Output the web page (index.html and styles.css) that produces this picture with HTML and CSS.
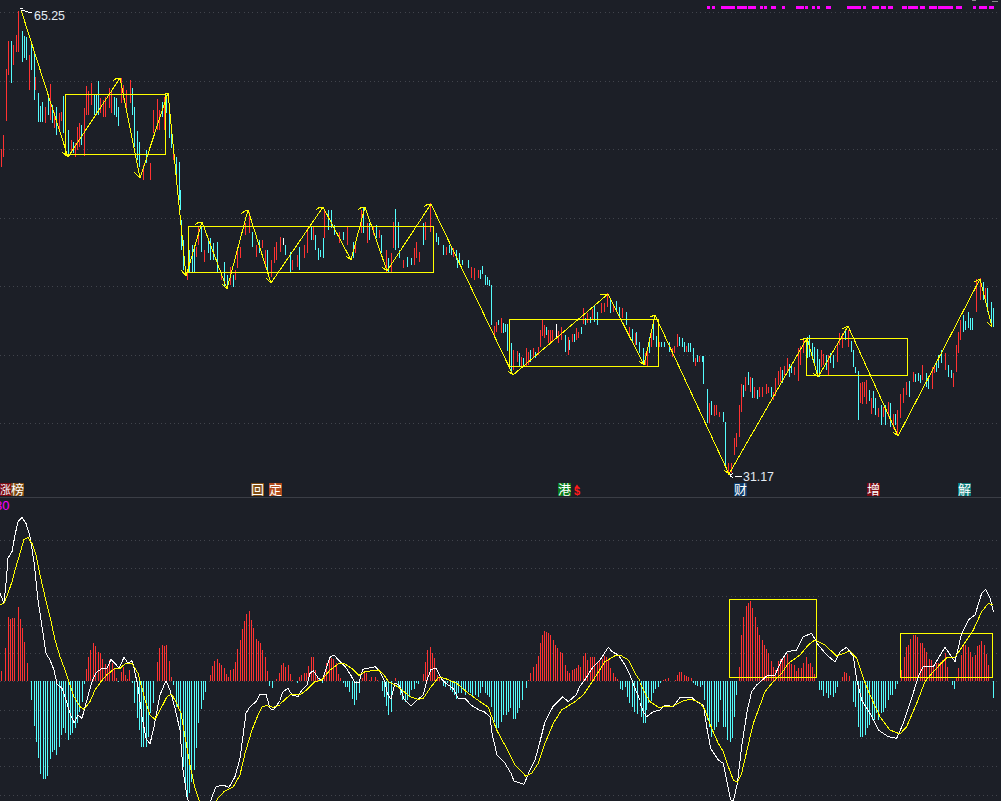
FILE: index.html
```html
<!DOCTYPE html>
<html lang="zh">
<head>
<meta charset="utf-8">
<title>K线图</title>
<link rel="stylesheet" href="styles.css">
</head>
<body>
<main class="chart">
<svg class="pane pane-price" width="1001" height="497" viewBox="0 0 1001 497">
  <path class="grid" d="M0 12.5H1001M0 81.5H1001M0 149.5H1001M0 218.5H1001M0 286.5H1001M0 355.5H1001M0 423.5H1001"/>
  <path class="signal" d="M707 7.5h3M712 7.5h3M721 7.5h14M737 7.5h10M748 7.5h8M760 7.5h3M764 7.5h3M771 7.5h5M782 7.5h3M796 7.5h8M805 7.5h3M812 7.5h3M817 7.5h3M826 7.5h5M847 7.5h14M863 7.5h3M872 7.5h7M881 7.5h5M888 7.5h5M902 7.5h5M908 7.5h10M920 7.5h5M929 7.5h8M938 7.5h15M956 7.5h6M973 7.5h3M979 7.5h8M989 7.5h5"/>
  <path class="tick" d="M972 0.5h4M992 1.5h6"/>

  <g transform="scale(.33333)">
    <path class="red" d="M4 447V500M12 405V470M19 207V362M25 123V225M40 135V195M49 105V155M55 33V155M88 165V270M108 230V270M137 320V368M151 252V360M163 335V385M178 340V390M184 335V362M214 420V455M226 430V470M232 380V450M238 368V440M253 323V467M259 258V345M265 273V345M274 250V315M302 295V340M310 300V350M318 290V350M328 265V325M336 270V340M365 235V310M372 255V300M381 270V330M391 240V310M430 495V540M451 490V540M460 330V400M472 297V390M478 330V390M495 290V390M522 445V480"/>
    <path class="cyan" d="M34 123V248M67 93V185M73 108V175M81 110V180M96 130V210M104 155V300M115 280V365M121 318V365M129 305V365M145 285V345M157 315V370M169 322V405M190 287V400M198 363V450M207 390V465M220 425V460M245 375V435M283 285V345M289 285V340M295 243V345M344 290V345M350 295V350M355 320V378M397 265V345M403 320V440M412 393V480M420 425V500M439 450V490M487 305V350M500 285V340M510 325V415M516 385V445M530 470V525M540 487V600"/>
  </g>
  <g transform="translate(180 190) scale(.33333)">
    <path class="red" d="M22 240V270M50 170V200M56 110V165M75 180V215M125 250V270M152 232V285M166 240V270M172 170V235M183 170V205M196 100V135M208 65V130M229 165V200M247 150V175M256 180V235M275 210V260M284 170V220M291 155V210M302 140V185M338 210V240M352 195V230M374 165V205M384 115V190M400 110V150M434 60V145M480 125V160M502 110V165M528 155V190M545 60V130M564 100V160M580 110V135M598 120V145M620 180V245M634 190V245M640 95V175M672 210V235M703 175V225M710 155V205M718 185V215M738 95V150M752 40V125M799 170V195M822 175V200"/>
    <path class="cyan" d="M2 0V60M5 90V180M12 150V240M30 180V245M38 165V245M45 170V245M65 110V185M85 145V190M91 145V210M100 160V210M113 155V245M133 215V290M143 255V295M160 255V292M217 125V170M240 150V190M262 180V245M317 165V195M333 185V245M360 170V240M395 110V150M407 135V180M415 175V210M422 180V200M430 145V205M447 60V120M454 60V115M465 105V135M492 125V150M520 155V205M552 55V130M570 100V150M590 105V145M606 135V190M626 205V245M646 58V180M656 97V175M660 180V205M684 200V230M695 205V225M732 100V165M760 115V155M770 130V155M777 140V165M790 165V195M808 165V190M815 170V195M830 180V210M838 190V215"/>
    <path class="white" d="M310 145V165"/>
  </g>
  <g transform="translate(440 260) scale(.33333)">
    <path class="red" d="M96 20V55M105 25V60M115 30V55M163 197V235M169 185V215M184 175V218M210 225V320M222 270V330M232 272V305M244 290V318M259 265V320M265 275V315M280 265V290M295 260V285M301 210V262M307 178V228M313 195V235M327 210V250M333 210V245M339 210V245M356 212V248M366 200V240M385 230V285M397 222V245M411 205V240M417 215V235M431 145V192M443 160V190M458 148V178M484 128V158M493 128V155M503 100V140M520 135V155M549 145V175M570 202V235M586 220V255M616 280V315M622 260V318M634 215V262M660 245V262M698 265V292M705 258V278M713 222V260M740 258V275M766 293V318M780 288V305"/>
    <path class="cyan" d="M52 0V25M68 0V15M87 0V25M121 30V57M128 18V42M137 45V75M142 52V75M148 60V78M154 75V195M175 180V195M191 190V220M196 192V215M202 192V272M216 248V335M238 280V320M250 295V318M271 270V305M287 275V295M319 200V225M377 225V275M390 240V270M405 222V245M424 200V222M437 175V195M451 172V190M464 135V185M472 155V195M511 120V160M530 123V155M540 142V170M561 155V195M577 208V248M591 215V255M600 245V280M610 265V310M628 230V280M640 180V240M650 228V262M665 245V262M675 245V260M690 245V275M720 232V258M727 235V260M733 245V275M746 250V275M752 250V275M760 265V305M772 285V305M787 287V305"/>
    <path class="white" d="M349 192V235"/>
  </g>
  <g transform="translate(700 270) scale(.33333)">
    <path class="red" d="M28 400V460M43 405V437M50 405V435M60 425V440M85 580V610M95 580V610M103 505V555M109 490V530M118 405V500M125 342V425M138 322V362M152 322V365M165 352V385M180 352V382M188 350V380M199 343V372M207 350V370M220 365V390M227 325V378M235 303V345M243 292V335M255 288V315M263 265V310M284 290V315M295 235V332M303 228V285M310 205V250M366 240V290M372 252V285M385 255V315M412 225V275M420 190V225M428 190V235M447 180V230M481 340V400M487 335V403M495 335V380M501 330V402M514 385V432M535 415V442M550 410V440M565 395V440M580 432V478M594 420V495M603 372V445M612 355V400M620 335V375M640 305V335M669 285V330M699 290V357M705 285V310M738 250V300M762 308V350M769 225V305M775 185V250M783 150V210M830 28V125M841 25V90M858 55V95"/>
    <path class="cyan" d="M12 258V342M22 357V460M34 392V435M71 427V455M76 455V595M131 345V380M145 307V345M157 325V385M172 360V388M214 350V382M249 300V340M270 283V320M276 285V310M322 200V265M330 195V260M338 218V270M344 232V280M352 238V310M358 268V320M380 255V300M392 250V280M400 255V295M437 180V210M455 212V245M461 240V290M467 290V310M475 303V450M508 360V392M522 362V415M528 385V435M544 405V465M556 405V465M573 400V470M587 432V465M628 332V382M647 312V335M655 310V332M661 315V340M681 310V350M687 325V358M711 280V305M717 255V295M724 240V280M747 285V320M754 300V325M790 135V185M798 152V180M805 125V175M813 145V180M819 145V180M852 35V90M864 55V125M874 95V160M880 115V170"/>
  </g>

  <g class="box">
    <rect x="65.5" y="94.5" width="100" height="60"/>
    <rect x="188.5" y="226.5" width="245" height="46"/>
    <rect x="509.5" y="319.5" width="149" height="47"/>
    <rect x="806.5" y="338.5" width="101" height="37"/>
  </g>
  <polyline class="zig" points="21,10 68,157 120,78 140,178 168,93 186,276 202,222 227,289 248,210 271,283 323,207 351,260 365,207 387,271 431,204 513,375 608,294 644,365 655,315 729,474 807,338 818,377 848,326 898,436 980,279 992,327"/>
  <path class="zig" d="M62 152L68 157M134 172L140 178M181 270L186 276M222 284L227 289M266 278L271 283M346 256L351 260M382 267L387 271M508 371L513 375M639 361L644 365M724 470L729 474M813 373L818 377M893 432L898 436M987 322L992 327M113 81L117 78L120 78M195 225L199 222L202 222M241 214L245 211L248 210M316 210L320 207L323 207M358 210L362 207L365 207M424 207L428 204L431 204M600 294L608 294M650 317L655 315M800 340L807 338M842 329L848 326M974 282L980 279M163 95L168 93"/>
  <path class="dot" d="M67 155h2v2h-2zM226 287h2v2h-2zM270 281h2v2h-2zM386 269h2v2h-2zM728 473h2v2h-2z"/>

  <path class="arrow" d="M21 10L32 13M20 9L23 8M735 476.5H742M730 475.5L733 473M730 475.5L733 478"/>
  <text class="price" x="34" y="20">65.25</text>
  <text class="price" x="743" y="481">31.17</text>

  <g class="tags">
    <rect class="t-red" x="0" y="483" width="11" height="13"/><text class="tag-narrow" x="0" y="494">涨</text>
    <rect class="t-brown" x="11" y="483" width="13" height="13"/><text x="11" y="494">榜</text>
    <rect class="t-brown" x="251" y="483" width="13" height="13"/><text x="251" y="494">回</text>
    <rect class="t-orange" x="269" y="483" width="13" height="13"/><text x="269" y="494">定</text>
    <rect class="t-green" x="558" y="483" width="13" height="13"/><text x="558" y="494">港</text>
    <rect class="t-navy" x="734" y="483" width="13" height="13"/><text x="734" y="494">财</text>
    <rect class="t-red" x="867" y="483" width="13" height="13"/><text x="867" y="494">增</text>
    <rect class="t-teal" x="958" y="483" width="13" height="13"/><text x="958" y="494">解</text>
  </g>
  <path class="up" d="M577 484.500L579.500 488H574.500Z"/>
  <text class="dollar" x="574" y="495">$</text>
</svg>

<div class="divider"></div>

<svg class="pane pane-macd" width="1001" height="303" viewBox="0 498 1001 303">
  <path class="grid" d="M0 540.500H1001M0 568.500H1001M0 596.500H1001M0 625.500H1001M0 653.500H1001M0 681.500H1001M0 710.500H1001M0 738.500H1001M0 766.500H1001M0 795.500H1001"/>
  <text class="param" x="-5" y="510">30</text>

  <g transform="translate(0 500) scale(.33333)">
    <path class="red" d="M5 544V513M18 544V445M25 544V350M33 544V357M39 544V354M45 544V353M55 544V320M61 544V357M67 544V385M73 544V425M82 544V490M259 544V507M265 544V470M271 544V450M280 544V430M286 544V437M295 544V455M301 544V460M307 544V478M316 544V492M322 544V500M328 544V480M337 544V490M343 544V505M349 544V535M364 544V515M370 544V500M376 544V525M382 544V538M390 544V510M472 544V485M478 544V443M487 544V435M493 544V437M499 544V435M508 544V483M514 544V530M631 544V525M637 544V498M643 544V483M652 544V477M658 544V490M664 544V495M673 544V505M679 544V522M685 544V530M691 544V510M700 544V507M706 544V487M712 544V447M721 544V420M727 544V388M733 544V362M739 544V342M748 544V333M754 544V360M760 544V385M769 544V418M775 544V422M781 544V428M787 544V450M796 544V470M802 544V513M829 544V538M838 544V518"/>
    <path class="cyan" d="M94 544V600M103 544V678M110 544V725M116 544V775M122 544V822M130 544V838M136 544V838M142 544V828M151 544V777M157 544V755M163 544V750M169 544V765M178 544V740M184 544V705M190 544V685M196 544V700M205 544V720M211 544V705M217 544V700M226 544V683M232 544V670M238 544V635M247 544V605M253 544V552M355 544V547M397 544V550M403 544V610M412 544V655M418 544V690M424 544V742M430 544V742M439 544V740M445 544V710M451 544V640M460 544V610M520 544V555M529 544V620M535 544V620M541 544V690M550 544V800M556 544V870M562 544V900M568 544V880M574 544V845M583 544V810M589 544V745M595 544V670M604 544V628M610 544V600M616 544V575M808 544V557M817 544V563"/>
  </g>
  <g transform="translate(280 600) scale(.33333)">
    <path class="red" d="M4 244V195M10 244V190M16 244V200M25 244V195M31 244V222M37 244V240M58 244V232M64 244V225M73 244V218M79 244V218M85 244V197M94 244V170M100 244V170M106 244V210M112 244V230M133 244V218M139 244V190M148 244V170M154 244V175M160 244V178M169 244V190M175 244V222M181 244V235M247 244V235M253 244V220M259 244V218M268 244V240M274 244V232M286 244V232M292 244V240M346 244V235M430 244V222M436 244V185M442 244V150M451 244V142M457 244V160M463 244V175M472 244V225M478 244V235M745 244V240M751 244V220M760 244V200M769 244V193M775 244V168M781 244V128M787 244V105M793 244V93M799 244V97M805 244V100M811 244V105M820 244V120M826 244V135M832 244V145M841 244V155M847 244V160M856 244V195M862 244V212M868 244V218M877 244V210M883 244V208M889 244V205M895 244V195M901 244V200M910 244V168M916 244V160M922 244V180M931 244V172M937 244V170M943 244V172M952 244V185M958 244V180M967 244V178M973 244V168M979 244V172M985 244V180M991 244V205M1000 244V218M1006 244V232M1012 244V238"/>
    <path class="cyan" d="M52 244V248M120 244V238M127 244V248M190 244V248M196 244V260M202 244V262M208 244V275M217 244V298M223 244V315M229 244V300M238 244V278M307 244V272M313 244V290M319 244V318M325 244V345M334 244V335M355 244V262M361 244V285M367 244V300M376 244V305M382 244V300M388 244V290M394 244V270M403 244V268M409 244V250M415 244V252M490 244V258M496 244V260M502 244V250M511 244V270M517 244V275M523 244V285M529 244V298M535 244V280M544 244V280M550 244V270M556 244V285M565 244V275M571 244V280M577 244V290M586 244V285M595 244V290M601 244V278M607 244V260M616 244V280M622 244V285M628 244V290M634 244V320M643 244V365M649 244V385M655 244V385M664 244V365M670 244V345M679 244V345M685 244V335M691 244V325M700 244V357M706 244V357M712 244V340M718 244V325M727 244V300M739 244V265M1021 244V268M1027 244V270M1036 244V260M1042 244V290M1048 244V308M1057 244V320M1063 244V335M1072 244V342"/>
  </g>
  <g transform="translate(640 570) scale(.33333)">
    <path class="red" d="M70 334V330M76 334V326M85 334V323M106 334V330M112 334V315M118 334V306M124 334V306M133 334V316M139 334V318M145 334V320M154 334V323M298 334V290M304 334V195M310 334V140M319 334V108M325 334V100M331 334V93M337 334V115M346 334V140M352 334V170M358 334V195M367 334V210M373 334V225M379 334V238M385 334V250M394 334V272M400 334V290M406 334V300M415 334V272M421 334V268M427 334V265M433 334V262M442 334V252M448 334V275M454 334V282M463 334V285M469 334V302M475 334V295M484 334V295M490 334V278M499 334V262M505 334V282M511 334V278M517 334V292M523 334V312M607 334V320M613 334V306M619 334V310M628 334V318M784 334V300M793 334V262M799 334V230M805 334V225M811 334V207M820 334V195M826 334V195M832 334V200M841 334V218M847 334V218M853 334V235M859 334V245M868 334V268M874 334V270M880 334V290M889 334V280M895 334V280M901 334V275M907 334V270M916 334V250M922 334V292M949 334V323M955 334V293M964 334V255M970 334V228M976 334V225M985 334V232M991 334V245M997 334V262M1006 334V255M1012 334V228M1018 334V225M1024 334V213M1033 334V225M1039 334V252M1045 334V285"/>
    <path class="cyan" d="M4 334V440M10 334V460M16 334V460M21 334V420M27 334V400M36 334V392M42 334V370M48 334V358M57 334V352M63 334V338M160 334V340M166 334V345M172 334V348M181 334V350M187 334V345M193 334V390M202 334V450M208 334V470M214 334V500M223 334V480M229 334V470M235 334V455M241 334V390M250 334V470M256 334V470M262 334V510M271 334V515M277 334V505M283 334V440M289 334V375M538 334V360M544 334V360M550 334V378M559 334V368M565 334V385M571 334V375M580 334V380M586 334V370M592 334V350M640 334V395M646 334V410M655 334V470M661 334V500M667 334V500M676 334V495M682 334V475M688 334V465M697 334V450M703 334V450M709 334V430M715 334V450M724 334V430M730 334V425M736 334V415M745 334V390M751 334V375M757 334V375M766 334V358M772 334V343M937 334V345M943 334V357M1060 334V385"/>
  </g>

  <g class="box">
    <rect x="729.500" y="599.500" width="87" height="78"/>
    <rect x="900.500" y="633.500" width="92" height="44"/>
  </g>

  <g class="line-dif">
    <polyline transform="translate(0 500) scale(.33333)" points="0,280 12,310 18,250 24,175 36,155 45,105 54,65 66,52 78,70 90,110 102,185 114,300 126,380 138,460 150,480 162,510 171,552 186,565 201,610 210,640 222,668 234,645 246,655 258,610 276,545 288,518 306,505 321,505 333,478 345,490 357,505 372,472 384,490 396,482 402,505 414,560 426,650 438,715 450,732 462,680 480,585 498,542 510,570 525,625 540,690 549,810 561,890 570,920 600,990 620,960 634,895 648,860 669,855 687,862 705,830 720,775 738,640 750,620 768,605 780,583 798,583 810,625 819,630 840,603"/>
    <polyline transform="translate(280 600) scale(.33333)" points="0,300 9,275 24,265 36,285 54,290 66,270 81,255 90,220 100,212 115,235 127,240 139,205 150,172 162,165 180,185 198,203 212,225 225,248 237,248 248,208 264,205 285,200 300,215 315,245 322,280 333,298 345,250 358,255 372,297 393,318 411,300 430,285 441,240 453,208 468,205 483,235 498,250 519,265 534,295 555,295 573,315 597,330 612,335 630,350 636,400 651,465 672,485 693,520 702,543 732,553 750,510 765,480 780,425 795,365 820,318 848,290 865,305 888,285 900,258 918,235 936,205 960,180 985,142 996,155 1015,165 1035,195 1050,225 1065,265 1080,300"/>
    <polyline transform="translate(640 570) scale(.33333)" points="0,400 10,425 20,440 40,425 60,420 75,405 100,410 120,382 155,382 170,395 190,405 200,470 212,535 235,570 250,580 262,640 272,690 280,693 292,640 305,530 322,420 335,365 350,345 380,318 405,315 425,270 442,245 470,240 490,200 515,190 535,225 560,255 585,275 600,245 620,232 640,260 650,330 665,390 690,430 715,480 745,500 770,505 790,460 810,400 835,320 850,290 880,290 915,232 945,275 965,190 985,150 1005,135 1025,70 1037,58 1050,85 1060,125"/>
  </g>
  <g class="line-dea">
    <polyline transform="translate(0 500) scale(.33333)" points="0,315 12,310 24,280 36,245 48,200 60,160 72,118 84,112 96,130 108,165 120,225 135,290 150,350 165,420 180,470 195,510 210,555 222,590 240,620 252,628 270,605 285,570 303,545 320,525 345,505 360,505 375,492 396,490 414,520 426,565 438,610 450,645 465,658 483,625 501,590 515,582 530,610 543,640 555,710 570,795 585,865 597,900 615,930 640,915 654,895 672,875 700,860 720,825 735,760 756,690 774,645 786,620 800,617 820,622 840,615"/>
    <polyline transform="translate(280 600) scale(.33333)" points="0,312 30,285 60,285 80,270 105,245 125,240 150,210 175,192 195,192 215,205 237,226 255,215 295,210 312,225 325,245 345,255 360,265 390,290 415,298 430,295 450,265 475,232 495,235 530,250 565,280 600,305 625,322 650,390 680,445 705,495 737,528 755,520 775,490 795,430 820,370 845,330 885,305 910,285 940,240 975,185 1005,167 1025,168 1045,180 1065,220 1080,242"/>
    <polyline transform="translate(640 570) scale(.33333)" points="0,340 15,370 30,395 55,412 100,408 130,392 155,388 180,398 195,420 215,475 235,520 250,545 265,590 280,630 292,637 305,610 320,545 340,460 355,420 375,365 400,335 425,310 445,280 480,255 505,225 525,210 555,225 590,258 630,243 650,265 670,325 690,375 720,440 750,480 780,492 800,470 830,400 855,335 880,305 920,263 945,262 970,225 1000,180 1025,125 1045,100 1058,105"/>
  </g>
</svg>
</main>
</body>
</html>
```
FILE: styles.css
```css
html, body {
  margin: 0;
  padding: 0;
  background: #1c1f27;
  overflow: hidden;
}

.chart {
  display: flex;
  flex-direction: column;
  width: 1001px;
  height: 801px;
  background: #1c1f27;
}

.pane {
  display: block;
  flex: none;
}

.divider {
  flex: none;
  height: 1px;
  background: #3b3e46;
}

path, polyline, rect {
  fill: none;
  shape-rendering: crispEdges;
  vector-effect: non-scaling-stroke;
}

.grid {
  stroke: #41444c;
  stroke-width: 1;
  stroke-dasharray: 1 3.35;
}

.signal {
  stroke: #ff00ff;
  stroke-width: 3;
}

.tick {
  stroke: #8a8a8a;
  stroke-width: 1;
}

.red { stroke: #ff3232; stroke-width: 1; }
.cyan { stroke: #54fcfc; stroke-width: 1; }
.white { stroke: #ffffff; stroke-width: 1; }

.box rect,
.zig {
  stroke: #ffff00;
  stroke-width: 1;
}

.dot {
  fill: #ffff00;
}

.arrow {
  stroke: #ffffff;
  stroke-width: 1;
}

.price {
  font: 12.4px "Liberation Sans", Arial, sans-serif;
  fill: #e4ecf4;
}

.tags text {
  font: 13px "Noto Sans CJK SC", "Noto Sans", sans-serif;
  fill: #ffffff;
}

.tags .tag-narrow {
  font-size: 11px;
}

.t-red { fill: #7a0a12; }
.t-brown { fill: #7c4a12; }
.t-orange { fill: #b04a1a; }
.t-green { fill: #0a7a1a; }
.t-navy { fill: #0c3c6c; }
.t-teal { fill: #0a7a7a; }

.up {
  fill: #ff1a1a;
  shape-rendering: auto;
}

.dollar {
  font: bold 11px "Liberation Sans", Arial, sans-serif;
  fill: #ff1a1a;
}

.param {
  font: 13px "Liberation Sans", Arial, sans-serif;
  fill: #ff00ff;
}

.line-dif polyline {
  stroke: #ffffff;
  stroke-width: 1;
}

.line-dea polyline {
  stroke: #ffff00;
  stroke-width: 1;
}
```
